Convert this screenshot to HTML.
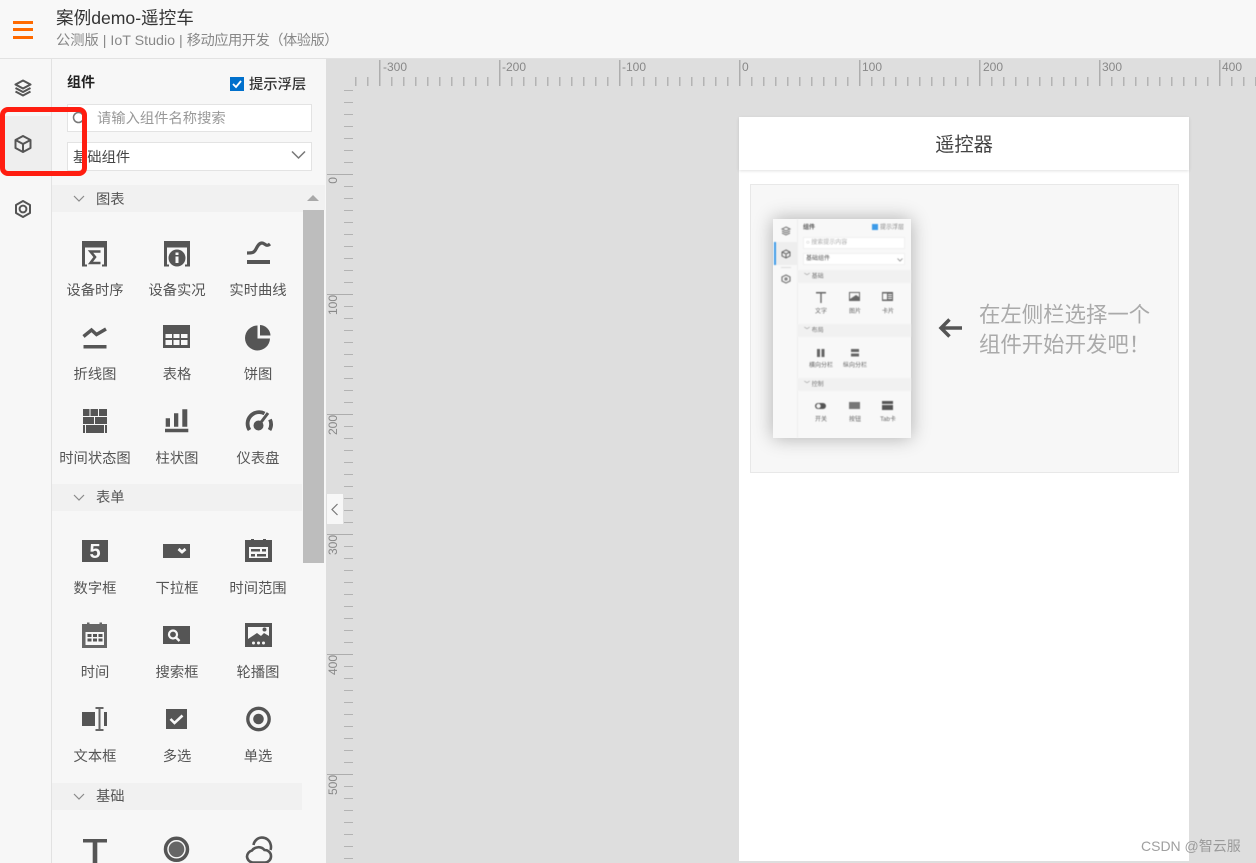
<!DOCTYPE html>
<html lang="zh">
<head>
<meta charset="utf-8">
<title>案例demo-遥控车</title>
<style>
*{box-sizing:border-box;margin:0;padding:0}
html,body{width:1256px;height:863px;overflow:hidden;background:#f7f7f7}
body{position:relative;font-family:"Liberation Sans","Noto Sans CJK SC",sans-serif;color:#555}
.a{position:absolute}
.t{position:absolute;white-space:nowrap;line-height:20px;height:20px}
.c{position:absolute;width:82px;text-align:center;font-size:14.300px;line-height:20px;color:#555;white-space:nowrap;margin-top:.5px}
svg{position:absolute;overflow:visible}
.ic{width:30px;height:30px}
.sec{position:absolute;left:52px;width:251px;height:27px;background:#f1f1f1}
.sec span{position:absolute;left:44px;top:4px;font-size:14.300px;line-height:20px;color:#555}
.sec svg{left:21px;top:10px}
.rl{position:absolute;font:12px/14px "Liberation Sans",sans-serif;color:#888;white-space:nowrap}
.rv{position:absolute;left:326px;width:14px;font:12px/14px "Liberation Sans",sans-serif;color:#888;writing-mode:vertical-rl;transform:rotate(180deg);white-space:nowrap}
.th{position:absolute;font-size:6px;line-height:8px;color:#666;white-space:nowrap;text-align:center;width:34px}
.ts{position:absolute;left:797px;width:114px;height:13px;background:#f1f1f1}
</style>
</head>
<body>
<!-- header -->
<div class="a" style="left:0;top:0;width:1256px;height:59px;background:#f8f8f8;border-bottom:1px solid #e2e2e2"></div>
<div class="a" style="left:13px;top:21px;width:20px;height:3px;background:#ff6a00"></div>
<div class="a" style="left:13px;top:28px;width:20px;height:3px;background:#ff6a00"></div>
<div class="a" style="left:13px;top:36px;width:20px;height:3px;background:#ff6a00"></div>
<div class="t" style="left:56px;top:8px;font-size:17.600px;color:#333">案例demo-遥控车</div>
<div class="t" style="left:56px;top:31px;font-size:14.250px;color:#888">公测版 | IoT Studio | <span style="letter-spacing:-.5px">移动应用开发（体验版）</span></div>

<!-- left rail -->
<div class="a" style="left:51px;top:59px;width:1px;height:804px;background:#e2e2e2"></div>
<div class="a" style="left:0;top:116px;width:51px;height:56px;background:#eeeeee"></div>
<svg style="left:13px;top:78px" width="20" height="20" viewBox="0 0 20 20" fill="none" stroke="#555" stroke-width="2.100" stroke-linejoin="round"><path d="M10 2.500L17.500 6.500 10 10.500 2.500 6.500z"/><path d="M2.500 10L10 14 17.500 10"/><path d="M2.500 13.500L10 17.500 17.500 13.500"/></svg>
<svg style="left:13px;top:134px" width="20" height="20" viewBox="0 0 20 20" fill="none" stroke="#555" stroke-width="2" stroke-linejoin="round"><path d="M10 2L17.500 6v8L10 18 2.500 14V6z"/><path d="M2.500 6L10 10 17.500 6M10 10v8"/></svg>
<svg style="left:13px;top:199px" width="20" height="20" viewBox="0 0 20 20" fill="none" stroke="#555" stroke-width="2" stroke-linejoin="round"><path d="M10 2L17 6v8l-7 4-7-4V6z"/><circle cx="10" cy="10" r="3.400"/></svg>

<!-- panel head -->
<div class="t" style="left:67px;top:72px;font-size:14px;font-weight:700;color:#222">组件</div>
<div class="a" style="left:230px;top:77px;width:14px;height:14px;background:#0070cc"></div>
<svg style="left:230px;top:77px" width="14" height="14" viewBox="0 0 14 14" fill="none" stroke="#fff" stroke-width="1.800"><path d="M3 7l3 3 5-6"/></svg>
<div class="t" style="left:249px;top:75px;font-size:14.300px;color:#333;font-weight:500">提示浮层</div>
<div class="a" style="left:67px;top:104px;width:245px;height:28px;background:#fff;border:1px solid #e3e3e3"></div>
<svg style="left:72px;top:111px" width="15" height="15" viewBox="0 0 15 15" fill="none" stroke="#777" stroke-width="1.500"><circle cx="6.500" cy="6.500" r="5"/><path d="M10 10l4 4"/></svg>
<div class="t" style="left:97px;top:108.500px;font-size:14.300px;color:#999">请输入组件名称搜索</div>
<div class="a" style="left:67px;top:142px;width:245px;height:29px;background:#fff;border:1px solid #e3e3e3"></div>
<div class="t" style="left:73px;top:148px;font-size:14.300px;color:#444">基础组件</div>
<svg style="left:291px;top:150px" width="15" height="10" viewBox="0 0 15 10" fill="none" stroke="#777" stroke-width="1.500"><path d="M1 1.500l6.500 6.500L14 1.500"/></svg>

<!-- scrollbar -->
<div class="a" style="left:303px;top:185px;width:22px;height:25px;background:#f1f1f1"></div>
<svg style="left:307px;top:194px" width="12" height="8" viewBox="0 0 12 8"><path d="M0 7L6 1l6 6z" fill="#a9a9a9"/></svg>
<div class="a" style="left:303px;top:210px;width:21px;height:353px;background:#bdbdbd"></div>

<!-- sections -->
<div class="sec" style="top:185px"><svg width="12" height="8" viewBox="0 0 12 8" fill="none" stroke="#8a8a8a" stroke-width="1.200"><path d="M1 1l5 5 5-5"/></svg><span style="top:5px">图表</span></div>
<div class="sec" style="top:484px;width:250px"><svg width="12" height="8" viewBox="0 0 12 8" fill="none" stroke="#8a8a8a" stroke-width="1.200"><path d="M1 1l5 5 5-5"/></svg><span>表单</span></div>
<div class="sec" style="top:783px;width:250px"><svg width="12" height="8" viewBox="0 0 12 8" fill="none" stroke="#8a8a8a" stroke-width="1.200"><path d="M1 1l5 5 5-5"/></svg><span>基础</span></div>

<!-- Row 1 -->
<svg class="ic" style="left:80px;top:239px" viewBox="0 0 30 30"><path fill="#555" d="M2 2h25v6.500H2zM2 8h3v19.500H2zM5 25.500h2v2H5zM24 8h3v19.500h-3zM22 25.500h2v2h-2z"/><path fill="none" stroke="#555" stroke-width="2.600" d="M20.500 12.500H10.500l4.500 5.500-4.500 6h10"/></svg>
<svg class="ic" style="left:162px;top:239px" viewBox="0 0 30 30"><path fill="#555" d="M2 2h26v6.500H2zM2 8h3v19.500H2zM5 25.500h2v2H5zM25 8h3v19.500h-3zM23 25.500h2v2h-2z"/><circle cx="15" cy="19" r="8.500" fill="#555"/><rect x="13.500" y="17.500" width="3" height="6.500" fill="#f7f7f7"/><rect x="13.500" y="13.500" width="3" height="2.500" fill="#f7f7f7"/></svg>
<svg class="ic" style="left:244px;top:239px" viewBox="0 0 30 30"><path fill="none" stroke="#555" stroke-width="3.200" d="M3 14C8 14 10 14 12 10 14 6 15.500 4 18 4 21 4 22 8.500 26 5"/><rect x="3" y="21" width="23" height="4" fill="#555"/></svg>

<!-- Row 2 -->
<svg class="ic" style="left:80px;top:322px" viewBox="0 0 30 30"><path fill="none" stroke="#555" stroke-width="3.400" d="M3.500 14.500l8-6.500 5 4.500L26 7"/><rect x="3.500" y="23" width="23" height="3.500" fill="#555"/></svg>
<svg class="ic" style="left:162px;top:322px" viewBox="0 0 30 30"><rect x="1" y="3" width="27" height="23" fill="#555"/><path fill="#f7f7f7" d="M3.500 12h6.500v4H3.500zM11.500 12h6v4h-6zM19 12h6.500v4H19zM3.500 18h6.500v5H3.500zM11.500 18h6v5h-6zM19 18h6.500v5H19z"/></svg>
<svg class="ic" style="left:244px;top:322px" viewBox="0 0 30 30"><path fill="#555" d="M13.500 3.500v13h12.500A12.500 12.500 0 1 1 13.500 3.500z"/><path fill="#555" d="M16 3a11 11 0 0 1 10.500 10.500H16z"/></svg>

<!-- Row 3 -->
<svg class="ic" style="left:80px;top:406px" viewBox="0 0 30 30"><path fill="#555" d="M3 3h6.500v7H3zM10.500 3H18v7h-7.500zM19 3h8v7h-8zM3 11h11v7H3zM15 11h12v7H15zM3 19h2v8H3zM6 19h18v8H6zM25 19h2v8h-2z"/></svg>
<svg class="ic" style="left:162px;top:406px" viewBox="0 0 30 30"><path fill="#555" d="M3.700 12.300H8v8.400H3.700zM12 7.300h4.300v13.400H12zM20.300 3.300h5v17.400h-5zM3 22.700h23.300v3.600H3z"/></svg>
<svg class="ic" style="left:244px;top:406px" viewBox="0 0 30 30"><path fill="none" stroke="#555" stroke-width="3.800" d="M5.500 24A11.500 11.500 0 0 1 20.500 7.500M26 13.500A11.500 11.500 0 0 1 25.500 24"/><circle cx="14.500" cy="19.500" r="5" fill="#555"/><path d="M15 19L24 7" stroke="#555" stroke-width="3"/></svg>

<div class="c" style="left:54px;top:280px">设备时序</div>
<div class="c" style="left:136px;top:280px">设备实况</div>
<div class="c" style="left:217px;top:280px">实时曲线</div>
<div class="c" style="left:54px;top:364px">折线图</div>
<div class="c" style="left:136px;top:364px">表格</div>
<div class="c" style="left:217px;top:364px">饼图</div>
<div class="c" style="left:54px;top:448px">时间状态图</div>
<div class="c" style="left:136px;top:448px">柱状图</div>
<div class="c" style="left:217px;top:448px">仪表盘</div>

<!-- Form Row 1 -->
<svg class="ic" style="left:80px;top:536px" viewBox="0 0 30 30"><rect x="2" y="4" width="26" height="22" fill="#555"/><text x="15" y="22" text-anchor="middle" font-family="Liberation Sans" font-weight="700" font-size="20" fill="#f7f7f7">5</text></svg>
<svg class="ic" style="left:162px;top:536px" viewBox="0 0 30 30"><rect x="1" y="8" width="27" height="14" fill="#555"/><path fill="none" stroke="#f7f7f7" stroke-width="2.800" d="M16.500 13l3.500 3 3.500-3"/></svg>
<svg class="ic" style="left:244px;top:536px" viewBox="0 0 30 30"><path fill="#555" d="M1 4h27v22H1z"/><path fill="#555" d="M7 3h3v2H7zM19 3h3v2h-3z"/><path fill="#f7f7f7" d="M5 11h19v11H5z"/><path fill="#555" d="M7 13h9v2.500H7zM18 13h4v2.500h-4zM7 18h4v2.500H7zM13 18h9v2.500h-9z"/></svg>

<!-- Form Row 2 -->
<svg class="ic" style="left:80px;top:620px" viewBox="0 0 30 30"><path fill="#666" d="M2 4h25v24H2z"/><path fill="#666" d="M7 2.500h2.500v2H7zM19.500 2.500H22v2h-2.500z"/><path fill="#f7f7f7" d="M5.500 12h18.500v13H5.500z"/><path fill="#555" d="M7.500 14h4v3h-4zM13 14h4v3h-4zM18.500 14h4v3h-4zM7.500 18.500h4v3h-4zM13 18.500h4v3h-4zM18.500 18.500h4v3h-4z"/></svg>
<svg class="ic" style="left:162px;top:620px" viewBox="0 0 30 30"><rect x="1" y="6" width="27" height="18" fill="#555"/><circle cx="11" cy="14.500" r="4" fill="none" stroke="#f7f7f7" stroke-width="2.200"/><path d="M14 17.500l3.500 3.500" stroke="#f7f7f7" stroke-width="2.400"/></svg>
<svg class="ic" style="left:244px;top:620px" viewBox="0 0 30 30"><rect x="1" y="3" width="27" height="24" fill="#555"/><path fill="#f7f7f7" d="M4 7h21v9l-5-3-3 3-4-3-9 6z"/><circle cx="20.500" cy="9.500" r="2" fill="#555"/><circle cx="9.500" cy="23" r="1.500" fill="#f7f7f7"/><circle cx="14.500" cy="23" r="1.500" fill="#f7f7f7"/><circle cx="19.500" cy="23" r="1.500" fill="#f7f7f7"/></svg>

<!-- Form Row 3 -->
<svg class="ic" style="left:80px;top:704px" viewBox="0 0 30 30"><path fill="#555" d="M2 8h13v14H2zM24 8h3v14h-3z"/><path fill="#666" d="M15.500 3h8v2h-3v20h3v2h-8v-2h3V5h-3z"/></svg>
<svg class="ic" style="left:162px;top:704px" viewBox="0 0 30 30"><rect x="4" y="5" width="21" height="20" fill="#555"/><path fill="none" stroke="#f7f7f7" stroke-width="2.600" d="M8.500 15l4 4 8-7.500"/></svg>
<svg class="ic" style="left:244px;top:704px" viewBox="0 0 30 30"><circle cx="14.500" cy="15" r="10.700" fill="none" stroke="#555" stroke-width="3.300"/><circle cx="14.500" cy="15" r="5.300" fill="#555"/></svg>

<div class="c" style="left:54px;top:578px">数字框</div>
<div class="c" style="left:136px;top:578px">下拉框</div>
<div class="c" style="left:217px;top:578px">时间范围</div>
<div class="c" style="left:54px;top:662px">时间</div>
<div class="c" style="left:136px;top:662px">搜索框</div>
<div class="c" style="left:217px;top:662px">轮播图</div>
<div class="c" style="left:54px;top:746px">文本框</div>
<div class="c" style="left:136px;top:746px">多选</div>
<div class="c" style="left:217px;top:746px">单选</div>

<!-- Base row -->
<svg class="ic" style="left:80px;top:836px" viewBox="0 0 30 30"><path fill="#555" d="M3 3h24v3.500H17.300V29h-4.600V6.500H3z"/></svg>
<svg class="ic" style="left:162px;top:834px" viewBox="0 0 30 30"><circle cx="14.500" cy="15.300" r="11" fill="none" stroke="#555" stroke-width="3.500"/><circle cx="14.500" cy="15.300" r="7.800" fill="#666"/></svg>
<svg class="ic" style="left:244px;top:834px" viewBox="0 0 30 30" fill="none" stroke="#555" stroke-width="2.600"><path d="M8.500 28.500A6.500 6.500 0 0 1 3 22.500 6.500 6.500 0 0 1 8 16.500 8 8 0 0 1 20.500 16 6.200 6.200 0 0 1 27 22.500 6.200 6.200 0 0 1 21 28.500Z"/><path d="M9.500 11A8.700 8.700 0 0 1 26.500 10Q27.500 13 26.500 16"/></svg>

<!-- canvas / ruler -->
<div class="a" style="left:326px;top:59px;width:930px;height:804px;background:#dedede"></div>
<div class="a" style="left:355px;top:77px;width:901px;height:9px;background:repeating-linear-gradient(to right,#b3b3b3 0,#b3b3b3 1.500px,transparent 1.500px,transparent 12px)"></div>
<div class="a" style="left:379px;top:60px;width:877px;height:26px;background:repeating-linear-gradient(to right,#adadad 0,#adadad 1.600px,transparent 1.600px,transparent 120px)"></div>
<div class="a" style="left:344px;top:90px;width:9px;height:773px;background:repeating-linear-gradient(to bottom,#b3b3b3 0,#b3b3b3 1.200px,transparent 1.200px,transparent 12px)"></div>
<div class="a" style="left:327px;top:174px;width:26px;height:689px;background:repeating-linear-gradient(to bottom,#adadad 0,#adadad 1.200px,transparent 1.200px,transparent 120px)"></div>
<div class="rl" style="left:383px;top:60px">-300</div>
<div class="rl" style="left:502px;top:60px">-200</div>
<div class="rl" style="left:622px;top:60px">-100</div>
<div class="rl" style="left:742px;top:60px">0</div>
<div class="rl" style="left:862px;top:60px">100</div>
<div class="rl" style="left:983px;top:60px">200</div>
<div class="rl" style="left:1102px;top:60px">300</div>
<div class="rl" style="left:1222px;top:60px">400</div>
<div class="rv" style="top:177px">0</div>
<div class="rv" style="top:295px">100</div>
<div class="rv" style="top:415px">200</div>
<div class="rv" style="top:535px">300</div>
<div class="rv" style="top:655px">400</div>
<div class="rv" style="top:775px">500</div>

<!-- collapse -->
<div class="a" style="left:327px;top:494px;width:16px;height:30px;background:#f7f7f7"></div>
<svg style="left:330px;top:503px" width="9" height="13" viewBox="0 0 9 13" fill="none" stroke="#777" stroke-width="1.200"><path d="M7.500 1L2 6.500 7.500 12"/></svg>

<!-- phone page -->
<div class="a" style="left:739px;top:117px;width:450px;height:744px;background:#fff"></div>
<div class="a" style="left:739px;top:117px;width:450px;height:53px;background:#fff;box-shadow:0 1px 3px rgba(0,0,0,.12)"></div>
<div class="t" style="left:739px;top:134px;width:450px;height:24px;line-height:24px;text-align:center;font-size:19.300px;color:#444">遥控器</div>
<div class="a" style="left:750px;top:184px;width:429px;height:289px;background:#f7f7f7;border:1px solid #e8e8e8"></div>

<!-- thumbnail -->
<div class="a" style="left:773px;top:219px;width:138px;height:219px;background:#f8f8f8;box-shadow:0 0 18px rgba(0,0,0,.3)"></div>
<div class="a" style="left:0;top:0;width:1256px;height:863px;filter:blur(.55px)">
<div class="a" style="left:797px;top:219px;width:1px;height:219px;background:#efefef"></div>
<div class="a" style="left:775px;top:242px;width:22px;height:23px;background:#eeeeee"></div>
<div class="a" style="left:774px;top:242px;width:2px;height:23px;background:#3c9be8"></div>
<svg style="left:781px;top:226px" width="10" height="10" viewBox="0 0 10 10" fill="none" stroke="#777" stroke-width="1"><path d="M5 1l4 2-4 2-4-2zM1 5l4 2 4-2M1 7l4 2 4-2"/></svg>
<svg style="left:781px;top:249px" width="10" height="10" viewBox="0 0 10 10" fill="none" stroke="#666" stroke-width="1"><path d="M5 1l4 2v4L5 9 1 7V3zM1 3l4 2 4-2M5 5v4"/></svg>
<svg style="left:781px;top:274px" width="10" height="10" viewBox="0 0 10 10" fill="none" stroke="#777" stroke-width="1.200"><path d="M5 1l4 2v4L5 9 1 7V3z"/><circle cx="5" cy="5" r="1"/></svg>
<div class="a" style="left:781px;top:267px;width:10px;height:1px;background:#ddd"></div>
<div class="th" style="left:803px;top:224px;width:auto;font-weight:700;color:#555">组件</div>
<div class="a" style="left:872px;top:224px;width:6px;height:6px;background:#3c9be8"></div>
<div class="th" style="left:880px;top:224px;width:auto;color:#888">提示浮层</div>
<div class="a" style="left:803px;top:237px;width:102px;height:12px;background:#fff;border:1px solid #f0f0f0"></div>
<div class="th" style="left:806px;top:239px;width:auto;color:#aaa">○ 搜索提示内容</div>
<div class="a" style="left:803px;top:253px;width:102px;height:12px;background:#fff;border:1px solid #f0f0f0"></div>
<div class="th" style="left:806px;top:255px;width:auto;color:#555">基础组件</div>
<svg style="left:897px;top:258px" width="6" height="4" viewBox="0 0 6 4" fill="none" stroke="#888" stroke-width=".8"><path d="M.5.5L3 3 5.500.5"/></svg>
<div class="ts" style="top:270px"></div>
<div class="th" style="left:804px;top:273px;width:auto;color:#777">﹀ 基础</div>
<div class="ts" style="top:324px"></div>
<div class="th" style="left:804px;top:327px;width:auto;color:#777">﹀ 布局</div>
<div class="ts" style="top:378px"></div>
<div class="th" style="left:804px;top:381px;width:auto;color:#777">﹀ 控制</div>

<svg style="left:815px;top:292px" width="12" height="11" viewBox="0 0 12 11"><path fill="#666" d="M1 0h10v1.500H6.700V11H5.300V1.500H1z"/></svg>
<svg style="left:849px;top:292px" width="12" height="10" viewBox="0 0 12 10"><rect width="11" height="9" fill="#666"/><path fill="#f7f7f7" d="M1 1h9v4L7 3 4 5 1 7z"/></svg>
<svg style="left:882px;top:292px" width="12" height="10" viewBox="0 0 12 10"><rect width="11" height="9" fill="#666"/><path fill="#f7f7f7" d="M1 1.500h4v6H1zM6 2h4v1H6zM6 4h4v1H6zM6 6h4v1H6z"/></svg>
<svg style="left:816px;top:348px" width="10" height="10" viewBox="0 0 10 10"><path fill="#666" d="M1 1h3v8H1zM5.500 1h3v8h-3z"/></svg>
<svg style="left:850px;top:348px" width="10" height="10" viewBox="0 0 10 10"><path fill="#666" d="M1 1h8v3H1zM1 5.500h8v3H1z"/></svg>
<svg style="left:815px;top:402px" width="12" height="8" viewBox="0 0 12 8"><rect y="1" width="11" height="6" rx="3" fill="#555"/><circle cx="3.500" cy="4" r="2.200" fill="#f7f7f7"/></svg>
<svg style="left:849px;top:402px" width="12" height="8" viewBox="0 0 12 8"><rect width="11" height="7" fill="#777"/></svg>
<svg style="left:882px;top:401px" width="12" height="10" viewBox="0 0 12 10"><rect y="0" width="11" height="3" fill="#555"/><rect y="4" width="11" height="5" fill="#555"/></svg>

<div class="th" style="left:804px;top:308px">文字</div>
<div class="th" style="left:838px;top:308px">图片</div>
<div class="th" style="left:871px;top:308px">卡片</div>
<div class="th" style="left:804px;top:362px">横向分栏</div>
<div class="th" style="left:838px;top:362px">纵向分栏</div>
<div class="th" style="left:804px;top:416px">开关</div>
<div class="th" style="left:838px;top:416px">按钮</div>
<div class="th" style="left:871px;top:416px">Tab卡</div>
</div>

<!-- hint -->
<svg style="left:937px;top:317px;filter:blur(.3px)" width="26" height="22" viewBox="0 0 26 22" fill="none" stroke="#555" stroke-width="3.500"><path d="M25 11H4M12.500 2.500L4 11l8.500 8.500"/></svg>
<div class="t" style="left:979px;top:299.500px;height:30px;line-height:30px;font-size:21.400px;color:#aaa;filter:blur(.3px)">在左侧栏选择一个</div>
<div class="t" style="left:979px;top:329.500px;height:30px;line-height:30px;font-size:21.400px;color:#aaa;filter:blur(.3px)">组件开始开发吧！</div>

<!-- watermark -->
<div class="t" style="left:1141px;top:836px;font-size:14px;color:#8f8f8f;opacity:.85">CSDN @智云服</div>

<!-- red annotation -->
<div class="a" style="left:0;top:107px;width:87px;height:69px;border:5px solid #ff1d10;border-radius:8px"></div>
</body>
</html>
